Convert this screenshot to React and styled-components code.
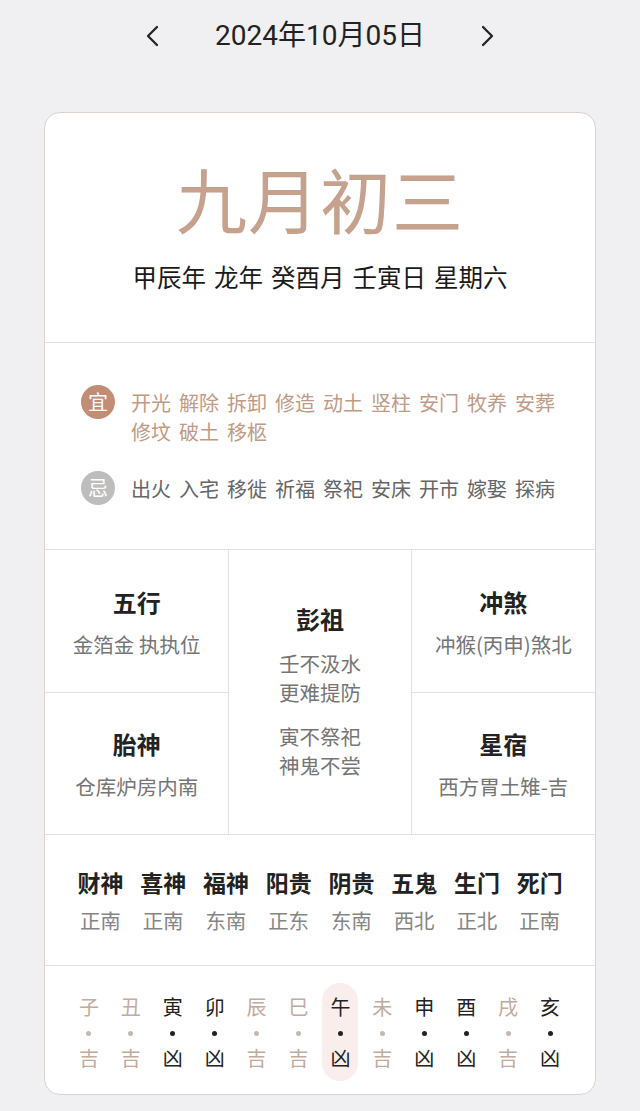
import React from 'react'
import styled, { createGlobalStyle } from 'styled-components'

const yi = ['开光', '解除', '拆卸', '修造', '动土', '竖柱', '安门', '牧养', '安葬', '修坟', '破土', '移柩']
const ji = ['出火', '入宅', '移徙', '祈福', '祭祀', '安床', '开市', '嫁娶', '探病']

const gods = [
  ['财神', '正南'],
  ['喜神', '正南'],
  ['福神', '东南'],
  ['阳贵', '正东'],
  ['阴贵', '东南'],
  ['五鬼', '西北'],
  ['生门', '正北'],
  ['死门', '正南'],
]

// branch, is it a bad hour
const hours = [
  ['子', false], ['丑', false], ['寅', true], ['卯', true],
  ['辰', false], ['巳', false], ['午', true], ['未', false],
  ['申', true], ['酉', true], ['戌', false], ['亥', true],
]

const Chevron = ({ dir }) => (
  <svg width="16" height="22" viewBox="0 0 16 22">
    {dir === 'left'
      ? <polyline points="12,2 3,11 12,20" fill="none" stroke="#222" strokeWidth="2.3" strokeLinecap="round" strokeLinejoin="round" />
      : <polyline points="4,2 13,11 4,20" fill="none" stroke="#222" strokeWidth="2.3" strokeLinecap="round" strokeLinejoin="round" />}
  </svg>
)

const App = () => {
  return (
    <Page>
      <GlobalStyle />
      <Header>
        <NavButton><Chevron dir="left" /></NavButton>
        <DateTitle>2024年10月05日</DateTitle>
        <NavButton><Chevron dir="right" /></NavButton>
      </Header>

      <Card>
        <Hero>
          <LunarDate>九月初三</LunarDate>
          <GanZhi>
            <span>甲辰年</span><span>龙年</span><span>癸酉月</span><span>壬寅日</span><span>星期六</span>
          </GanZhi>
        </Hero>

        <YiJi>
          <YiJiRow>
            <Badge $tone="yi">宜</Badge>
            <WordList $color="#bf9a85">
              {yi.map(w => <span key={w}>{w}</span>)}
            </WordList>
          </YiJiRow>
          <YiJiRow>
            <Badge $tone="ji">忌</Badge>
            <WordList $color="#666">
              {ji.map(w => <span key={w}>{w}</span>)}
            </WordList>
          </YiJiRow>
        </YiJi>

        <InfoGrid>
          <Cell>
            <CellTitle>五行</CellTitle>
            <CellText>金箔金 执执位</CellText>
          </Cell>
          <PengZu>
            <CellTitle>彭祖</CellTitle>
            <Verse>壬不汲水<br />更难提防</Verse>
            <Verse>寅不祭祀<br />神鬼不尝</Verse>
          </PengZu>
          <Cell>
            <CellTitle>冲煞</CellTitle>
            <CellText>冲猴(丙申)煞北</CellText>
          </Cell>
          <Cell $lower>
            <CellTitle>胎神</CellTitle>
            <CellText>仓库炉房内南</CellText>
          </Cell>
          <Cell $lower>
            <CellTitle>星宿</CellTitle>
            <CellText>西方胃土雉-吉</CellText>
          </Cell>
        </InfoGrid>

        <GodsRow>
          {gods.map(([name, dir]) => (
            <God key={name}>
              <GodName>{name}</GodName>
              <GodDir>{dir}</GodDir>
            </God>
          ))}
        </GodsRow>

        <HoursRow>
          {hours.map(([b, bad]) => (
            <Hour key={b} $active={b === '午'}>
              <Branch $bad={bad}>{b}</Branch>
              <Dot $bad={bad} />
              <Luck $bad={bad}>{bad ? '凶' : '吉'}</Luck>
            </Hour>
          ))}
        </HoursRow>
      </Card>
    </Page>
  )
}

export default App

const GlobalStyle = createGlobalStyle`
body{
  margin:0;
  background:#f0f0f2;
  font-family:"Noto Sans CJK SC", "Noto Sans", sans-serif;
  color:#222;
}
`

const Page = styled.div`
min-height:1111px;
padding-bottom:14px;
box-sizing:border-box;
`

const Header = styled.div`
height:72px;
margin-bottom:40px;
display:flex;
align-items:center;
justify-content:center;
gap:54px;
`

const NavButton = styled.div`
display:flex;
align-items:center;
width:16px;
height:22px;
`

const DateTitle = styled.div`
font-family:Roboto, "Noto Sans CJK SC", sans-serif;
font-size:28px;
line-height:36px;
color:#222;
`

const Card = styled.div`
margin:0 44px;
background:#fff;
border:1px solid #dcd3ce;
border-radius:16px;
overflow:hidden;
`

const Hero = styled.div`
height:229px;
box-sizing:border-box;
padding-top:42px;
display:flex;
flex-direction:column;
align-items:center;
`

const LunarDate = styled.div`
font-size:71px;
line-height:84px;
color:#c6a18d;
letter-spacing:1px;
`

const GanZhi = styled.div`
margin-top:22px;
font-size:24.5px;
line-height:32px;
display:flex;
gap:8px;
color:#1a1a1a;
`

const YiJi = styled.div`
height:207px;
box-sizing:border-box;
border-top:1px solid #e6e0dc;
padding:0 34px 0 36px;
display:flex;
flex-direction:column;
justify-content:center;
gap:28px;
`

const YiJiRow = styled.div`
display:flex;
align-items:flex-start;
gap:16px;
`

const Badge = styled.div`
flex:none;
width:34px;
height:34px;
margin-top:-3px;
border-radius:50%;
background:${p => (p.$tone === 'yi' ? '#c18d74' : '#bdbdbd')};
color:#fff;
font-size:20px;
display:flex;
align-items:center;
justify-content:center;
`

const WordList = styled.div`
flex:1;
display:flex;
flex-wrap:wrap;
column-gap:8px;
font-size:20px;
line-height:29px;
color:${p => p.$color};
`

const InfoGrid = styled.div`
border-top:1px solid #e6e0dc;
display:grid;
grid-template-columns:1fr 1fr 1fr;
grid-template-rows:142px 142px;
`

const Cell = styled.div`
display:flex;
flex-direction:column;
align-items:center;
justify-content:center;
gap:13px;
padding-top:2px;
border-top:${p => (p.$lower ? '1px solid #e6e0dc' : 'none')};
`

const PengZu = styled.div`
grid-row:span 2;
grid-column:2;
border-left:1px solid #e6e0dc;
border-right:1px solid #e6e0dc;
display:flex;
flex-direction:column;
align-items:center;
justify-content:center;
`

const CellTitle = styled.div`
font-size:24px;
line-height:30px;
font-weight:700;
color:#222;
`

const CellText = styled.div`
font-size:20.5px;
line-height:28px;
color:#757575;
white-space:nowrap;
`

const Verse = styled.div`
font-size:20.5px;
line-height:29px;
color:#757575;
text-align:center;
margin-top:15px;
`

const GodsRow = styled.div`
height:131px;
box-sizing:border-box;
border-top:1px solid #e6e0dc;
padding:0 24px;
display:grid;
grid-template-columns:repeat(8, 1fr);
align-items:center;
`

const God = styled.div`
display:flex;
flex-direction:column;
align-items:center;
gap:9px;
`

const GodName = styled.div`
font-size:23px;
line-height:30px;
font-weight:700;
color:#222;
white-space:nowrap;
`

const GodDir = styled.div`
font-size:20.5px;
line-height:28px;
color:#858585;
white-space:nowrap;
`

const HoursRow = styled.div`
height:129px;
box-sizing:border-box;
border-top:1px solid #e6e0dc;
padding:17px 24px 0 23px;
display:grid;
grid-template-columns:repeat(12, 1fr);
align-items:start;
justify-items:center;
`

const Hour = styled.div`
width:36px;
height:98px;
box-sizing:border-box;
padding-top:10px;
border-radius:18px;
background:${p => (p.$active ? '#f9eeeb' : 'transparent')};
display:flex;
flex-direction:column;
align-items:center;
`

const Branch = styled.div`
font-size:20px;
line-height:28px;
color:${p => (p.$bad ? '#222' : '#c3aa9c')};
`

const Dot = styled.div`
width:5px;
height:5px;
margin:10px 0 8px;
border-radius:50%;
background:${p => (p.$bad ? '#222' : '#c9b8ad')};
`

const Luck = styled.div`
font-size:20px;
line-height:28px;
color:${p => (p.$bad ? '#222' : '#c3aa9c')};
`
